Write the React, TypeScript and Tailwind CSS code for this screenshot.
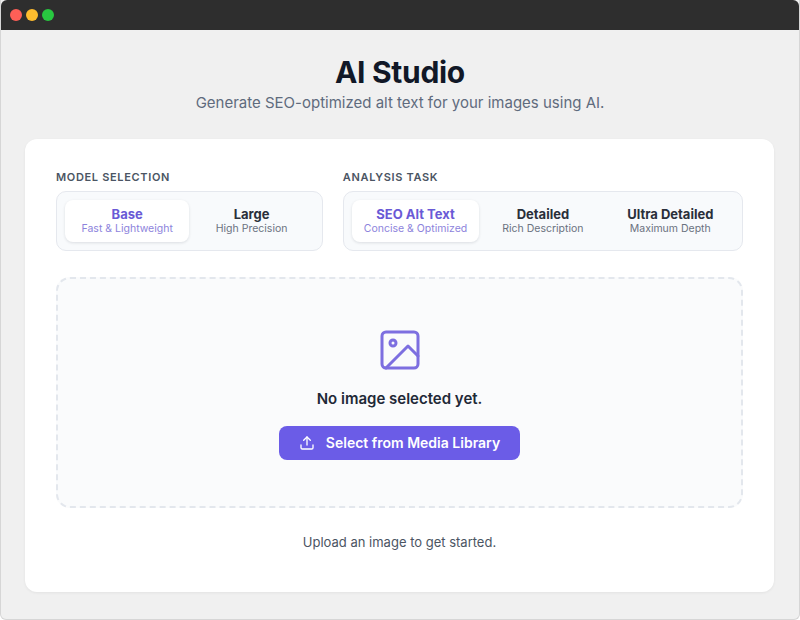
import React from "react";
import { FiImage, FiUpload } from "react-icons/fi";

function Tile({ title, sub, active }: { title: string; sub: string; active?: boolean }) {
  return (
    <div
      className={
        active
          ? "flex-1 flex flex-col items-center justify-center h-[42px] rounded-lg bg-white shadow-[0_1px_3px_rgba(15,23,42,0.12)]"
          : "flex-1 flex flex-col items-center justify-center h-[42px] rounded-lg"
      }
    >
      <div className={active ? "text-[13px] leading-4 font-bold text-[#6a5ad6]" : "text-[13px] leading-4 font-bold text-[#2a2f3a]"}>
        {title}
      </div>
      <div className={active ? "text-[10.5px] leading-[14px] text-[#8d83dc]" : "text-[10.5px] leading-[14px] text-[#6b7280]"}>
        {sub}
      </div>
    </div>
  );
}

export default function App() {
  return (
    <div
      className="w-[800px] h-[620px] flex flex-col bg-[#f0f0f0] overflow-hidden border-x border-b border-[#d6d6d6] rounded-b-md"
      style={{ fontFamily: "Inter, 'Noto Sans', 'Liberation Sans', sans-serif" }}
    >
      <div className="h-[30px] shrink-0 bg-[#2e2e2e] flex items-center gap-1 pl-[9px] rounded-t-md">
        <span className="w-3 h-3 rounded-full bg-[#fe5f57]" />
        <span className="w-3 h-3 rounded-full bg-[#febc2e]" />
        <span className="w-3 h-3 rounded-full bg-[#28c840]" />
      </div>
      <div className="flex flex-col items-center pt-6">
        <h1 className="text-[30px] leading-9 font-bold text-[#111827] tracking-[-0.01em]">AI Studio</h1>
        <p className="mt-[2px] text-[15px] leading-[22px] text-[#5f6b7d]">
          Generate SEO-optimized alt text for your images using AI.
        </p>
      </div>
      <div className="ml-[24px] mt-[25px] w-[749px] bg-white rounded-xl shadow-[0_1px_3px_rgba(0,0,0,0.06)] px-[31px] pt-[30px] pb-[41px]">
        <div className="grid grid-cols-[2fr_3fr] gap-5">
          <div>
            <div className="text-[11px] leading-4 font-semibold tracking-[0.06em] text-[#4b5563] mb-[6px]">MODEL SELECTION</div>
            <div className="flex rounded-[10px] border border-[#e5e8ee] bg-[#f8fafc] p-2">
              <Tile title="Base" sub="Fast & Lightweight" active />
              <Tile title="Large" sub="High Precision" />
            </div>
          </div>
          <div>
            <div className="text-[11px] leading-4 font-semibold tracking-[0.06em] text-[#4b5563] mb-[6px]">ANALYSIS TASK</div>
            <div className="flex rounded-[10px] border border-[#e5e8ee] bg-[#f8fafc] p-2">
              <Tile title="SEO Alt Text" sub="Concise & Optimized" active />
              <Tile title="Detailed" sub="Rich Description" />
              <Tile title="Ultra Detailed" sub="Maximum Depth" />
            </div>
          </div>
        </div>
        <div className="mt-[26px] h-[231px] rounded-[14px] border-2 border-dashed border-[#e3e7ed] bg-[#fafbfc] flex flex-col items-center justify-center">
          <FiImage className="w-12 h-12 text-[#7d6fe0]" strokeWidth={1.5} />
          <div className="mt-[15px] text-[15px] leading-5 font-semibold text-[#1f2937]">No image selected yet.</div>
          <button className="mt-[17px] h-[34px] flex items-center gap-[11px] px-5 rounded-lg bg-[#6b5ce7] text-white text-[14px] font-semibold">
            <FiUpload className="w-4 h-4" strokeWidth={2} />
            Select from Media Library
          </button>
        </div>
        <div className="mt-[25px] text-center text-[13px] leading-[18px] text-[#4b5563]">Upload an image to get started.</div>
      </div>
    </div>
  );
}
